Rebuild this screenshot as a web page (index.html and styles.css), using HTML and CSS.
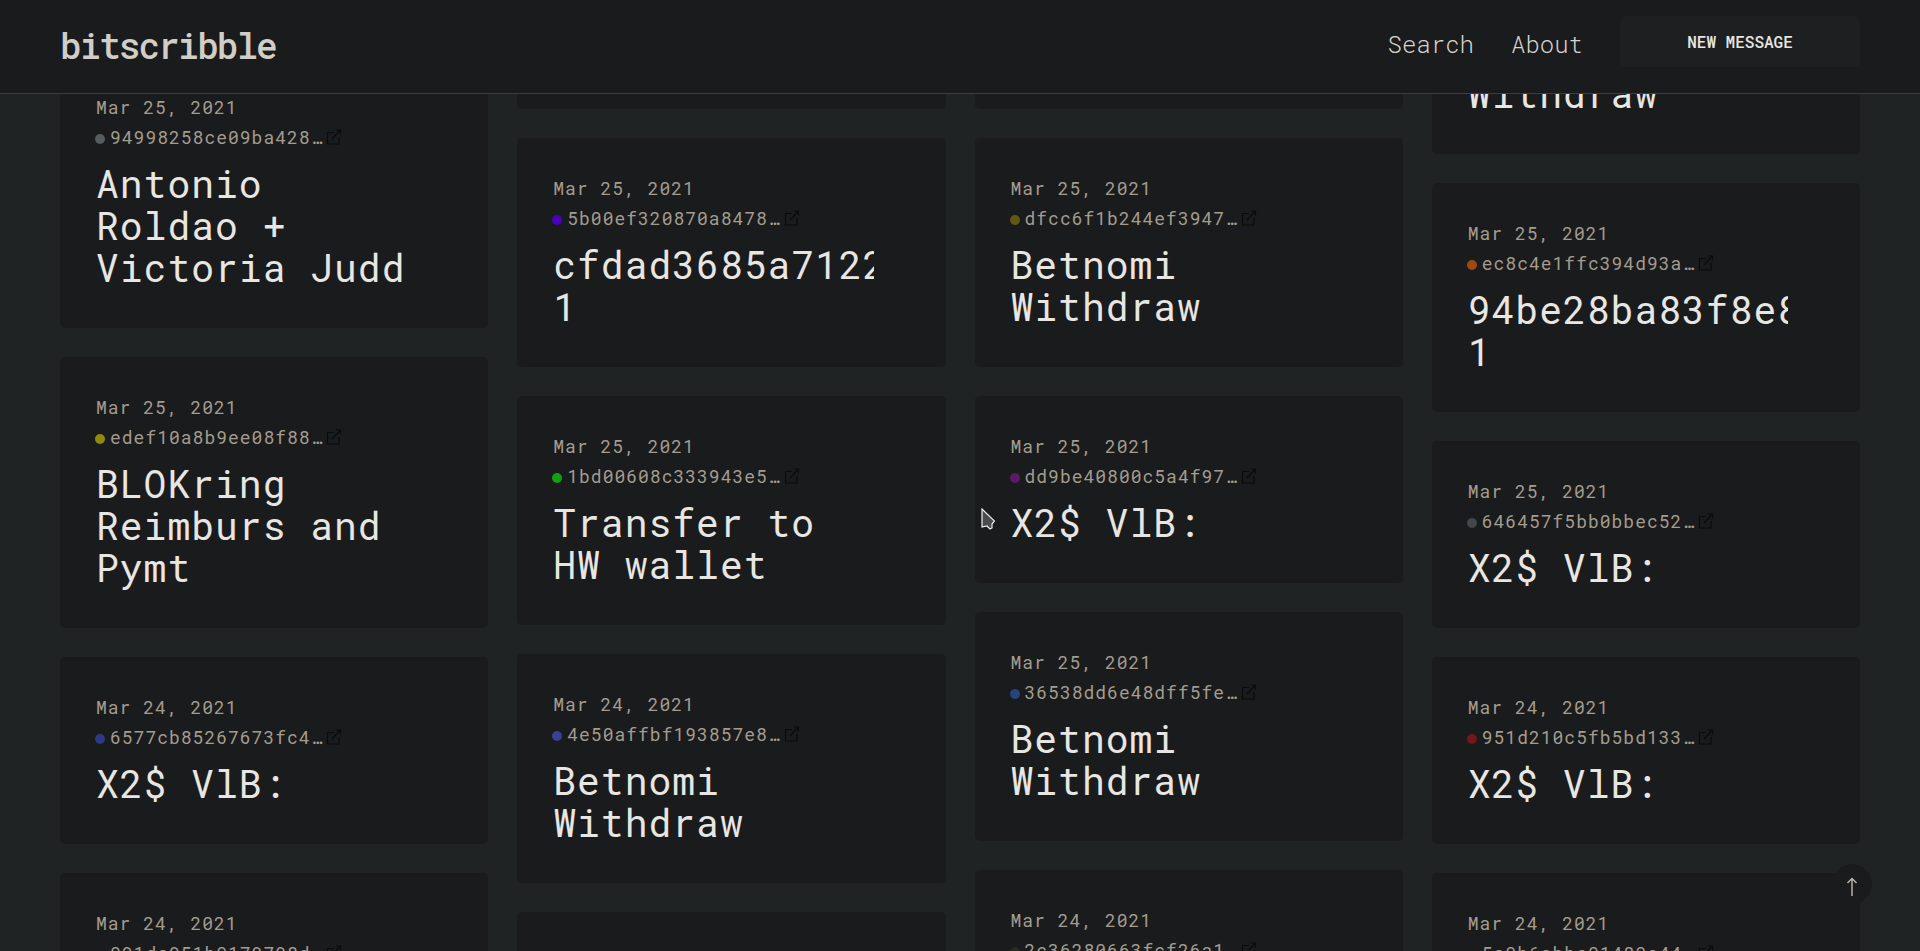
FILE: index.html
```html
<!DOCTYPE html>
<html lang="en">
<head>
    <meta charset="utf-8">
    <title>bitscribble</title>
    <meta name="viewport" content="width=device-width, initial-scale=1.0">
    <link rel="stylesheet" href="styles.css">
</head>
<body>
    <svg class="sprite" aria-hidden="true">
        <symbol id="external" viewBox="0 0 16 16">
            <path d="M8 3.500H1.500v11.500h11.500V8M6 10L14 1.500M10 1h4.500V5.500" fill="none" stroke="currentColor" stroke-width="1.200"/>
        </symbol>
    </svg>

    <header class="header">
        <a class="logo" href="#">bitscribble</a>
        <nav class="nav">
            <a href="#">Search</a>
            <a href="#">About</a>
            <button class="new-message" type="button">NEW MESSAGE</button>
        </nav>
    </header>

    <main class="messages" id="messages"></main>

    <button class="to-top" type="button" aria-label="Back to top">
        <svg width="12" height="20" viewBox="0 0 12 20"><path d="M6 19V2M1.500 6L6 1.500L10.500 6" fill="none" stroke="currentColor" stroke-width="1.500"/></svg>
    </button>
    <svg class="pointer" viewBox="0 0 14 22" aria-hidden="true"><path d="M1 1v18l5-1 3 3 2-1v-4l2.500-3z" fill="#4c4c4c" stroke="#eee" stroke-width="1.200"/></svg>

    <script src="script.js"></script>
</body>
</html>
```
FILE: styles.css
```css
* {
    box-sizing: border-box;
}

body {
    margin: 0;
    height: 100vh;
    display: flex;
    flex-direction: column;
    overflow: hidden;
    background: #1f2323;
    color: #e8e6e3;
    font-family: "Roboto Mono", "Liberation Mono", monospace;
}

a {
    color: inherit;
    text-decoration: none;
}

.sprite {
    display: none;
}

/* header */
.header {
    display: flex;
    flex: none;
    justify-content: space-between;
    padding: 16px 60px 26px;
    background: #1a1b1c;
    border-bottom: 1px solid #3b3d3e;
}

.logo {
    height: 51px;
    font-size: 36px;
    font-weight: 500;
    letter-spacing: -2px;
    line-height: 58px;
    color: #d1cdc7;
}

.nav {
    display: flex;
    align-items: center;
    gap: 37px;
    font-size: 24px;
    font-weight: 300;
    line-height: 32px;
    color: #d8d4cf;
}

.nav a {
    padding-top: 4px;
}

.new-message {
    width: 240px;
    height: 51px;
    padding: 0;
    border: 0;
    border-radius: 5px;
    background: #1d1f20;
    color: #e8e6e3;
    font-family: inherit;
    font-size: 16px;
    font-weight: 500;
}

/* masonry columns, scrolled part way down */
.messages {
    flex: 1;
    min-height: 0;
    overflow: hidden;
    display: grid;
    grid-template-columns: repeat(4, minmax(0, 1fr));
    align-items: start;
    gap: 29px;
    padding: 0 60px;
}

.column {
    display: flex;
    flex-direction: column;
    gap: 29px;
}

.column:nth-child(1) { margin-top: -37px; }
.column:nth-child(2) { margin-top: -172px; }
.column:nth-child(3) { margin-top: -172px; }
.column:nth-child(4) { margin-top: -169px; }

.card {
    padding: 35px 36px 40px;
    border-radius: 5px;
    background: #1a1b1c;
    letter-spacing: 1px;
}

.date,
.hash {
    font-size: 18px;
    line-height: 30px;
    color: #a39c8f;
}

.hash {
    display: flex;
    align-items: center;
    margin: 0 0 10px -1px;
}

.dot {
    width: 10px;
    height: 10px;
    margin: 4px 5px 0 0;
    border-radius: 50%;
}

.external {
    width: 16px;
    height: 16px;
    margin-left: 4px;
    color: #0a0b0b;
}

.title {
    width: 90%;
    margin: 0;
    overflow-x: clip;
    font-size: 38px;
    font-weight: normal;
    line-height: 42px;
}

/* floating bits */
.to-top {
    position: fixed;
    right: 48px;
    bottom: 47px;
    width: 40px;
    height: 40px;
    padding: 6px 0 0;
    display: flex;
    align-items: center;
    justify-content: center;
    border: 0;
    border-radius: 50%;
    background: #1a1b1c;
    color: #b8b2a8;
}

.pointer {
    position: fixed;
    left: 981px;
    top: 508px;
    width: 14px;
    height: 22px;
}
```
FILE: script.js
```js
const columns = [
    [
        ['Mar 25, 2021', '94998258ce09ba428…', '#555b5e', 'Antonio Roldao + Victoria Judd'],
        ['Mar 25, 2021', 'edef10a8b9ee08f88…', '#8f8c0b', 'BLOKring Reimburs and Pymt'],
        ['Mar 24, 2021', '6577cb85267673fc4…', '#2c3a85', 'X2$ VlB:'],
        ['Mar 24, 2021', '091de951b0179798d…', '#1a1b1c', 'X2$ VlB:']
    ],
    [
        ['Mar 25, 2021', '5b00ef320870a8478…', '#4b00c0', 'X2$ VlB:'],
        ['Mar 25, 2021', '5b00ef320870a8478…', '#4b00c0', 'cfdad3685a71228e0f 1'],
        ['Mar 25, 2021', '1bd00608c333943e5…', '#12a012', 'Transfer to HW wallet'],
        ['Mar 24, 2021', '4e50affbf193857e8…', '#3d3f94', 'Betnomi Withdraw'],
        ['Mar 24, 2021', '4e50affbf193857e8…', '#3d3f94', 'X2$ VlB:']
    ],
    [
        ['Mar 25, 2021', 'dd9be40800c5a4f97…', '#5b1a66', 'X2$ VlB:'],
        ['Mar 25, 2021', 'dfcc6f1b244ef3947…', '#635514', 'Betnomi Withdraw'],
        ['Mar 25, 2021', 'dd9be40800c5a4f97…', '#5b1a66', 'X2$ VlB:'],
        ['Mar 25, 2021', '36538dd6e48dff5fe…', '#27457c', 'Betnomi Withdraw'],
        ['Mar 24, 2021', '2c36280663fcf26a1…', '#252b1d', 'X2$ VlB:']
    ],
    [
        ['Mar 25, 2021', 'ec8c4e1ffc394d93a…', '#9c4a12', 'Betnomi Withdraw'],
        ['Mar 25, 2021', 'ec8c4e1ffc394d93a…', '#9c4a12', '94be28ba83f8e8c41d 1'],
        ['Mar 25, 2021', '646457f5bb0bbec52…', '#42484b', 'X2$ VlB:'],
        ['Mar 24, 2021', '951d210c5fb5bd133…', '#74181c', 'X2$ VlB:'],
        ['Mar 24, 2021', '5a0b6abbe01480e44…', '#1a1b1c', 'X2$ VlB:']
    ]
];

function card([date, hash, color, title]) {
    return `
        <article class="card">
            <div class="date">${date}</div>
            <a class="hash" href="#">
                <span class="dot" style="background:${color}"></span>${hash}
                <svg class="external"><use href="#external"/></svg>
            </a>
            <h2 class="title">${title}</h2>
        </article>`;
}

document.getElementById('messages').innerHTML = columns
    .map(cards => `<div class="column">${cards.map(card).join('')}</div>`)
    .join('');
```
